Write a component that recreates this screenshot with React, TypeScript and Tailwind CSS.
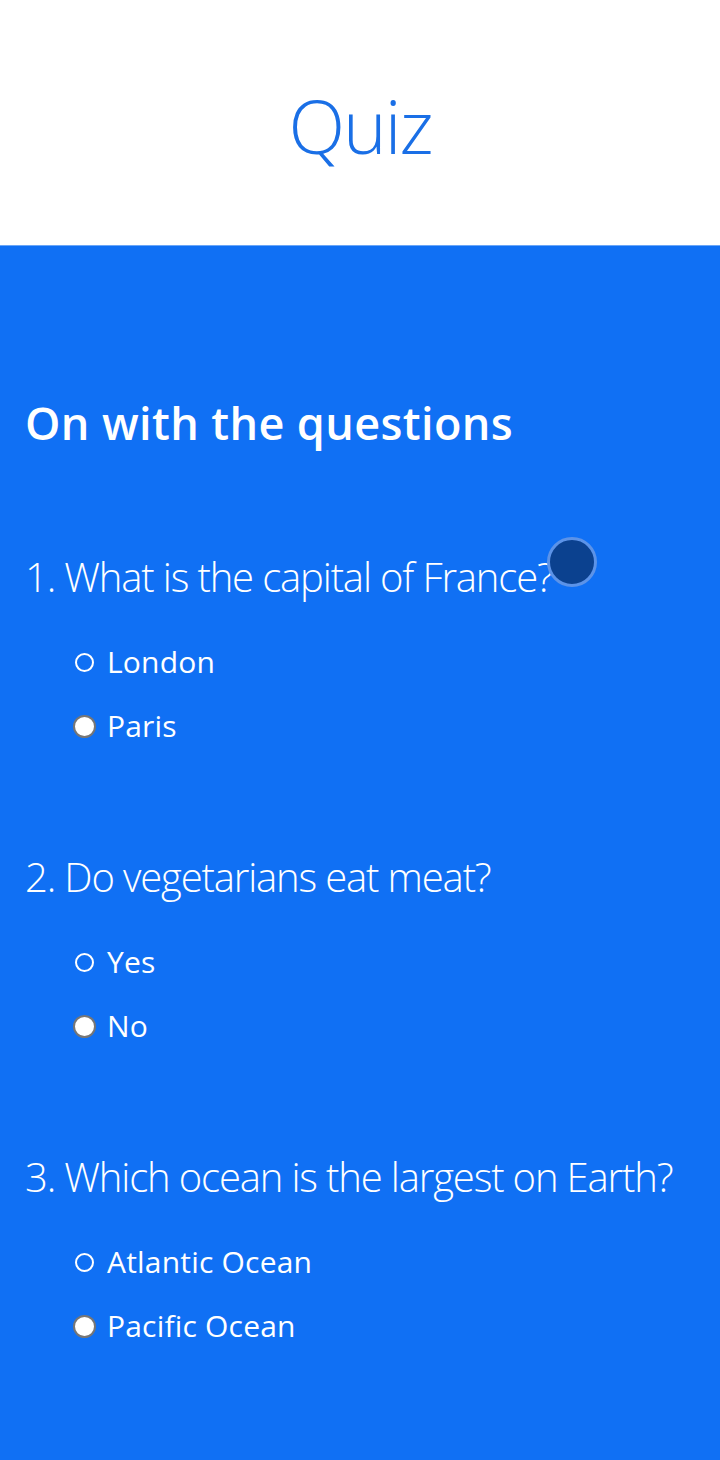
import React from "react";

const questions = [
  { q: "1. What is the capital of France?", opts: ["London", "Paris"] },
  { q: "2. Do vegetarians eat meat?", opts: ["Yes", "No"] },
  { q: "3. Which ocean is the largest on Earth?", opts: ["Atlantic Ocean", "Pacific Ocean"] },
];

export default function App() {
  return (
    <div className="w-[720px] min-h-[1460px] bg-[#1070f4] font-['Open_Sans',sans-serif]">
      <header className="h-[246px] bg-white flex items-center justify-center border-b border-[#6aa6f7]">
        <h1 className="text-[74px] font-light text-[#1a6fe6] leading-none mt-[6px] tracking-[-2px]">Quiz</h1>
      </header>
      <main className="relative px-[25px] pt-[147px] pb-[101px] text-white">
        <h2 className="text-[45px] font-semibold leading-[60px] h-[60px] tracking-[0.4px]">On with the questions</h2>
        {questions.map((item, i) => (
          <section key={i} className={i === 0 ? "mt-[94px]" : "mt-[89px]"}>
            <p className="text-[40px] font-light leading-[60px] h-[60px] whitespace-nowrap tracking-[-1.15px]">{item.q}</p>
            <div className="mt-[23px] pl-[48px]">
              {item.opts.map((o, j) => (
                <label key={j} className="flex items-center h-[64px]">
                  {j === 0 ? (
                    <span className="w-[19px] h-[19px] rounded-full border-[2.5px] border-white ml-[2px] mr-[13px]" />
                  ) : (
                    <span className="w-[23px] h-[23px] rounded-full bg-white border-[2px] border-[#767676] mr-[11px]" />
                  )}
                  <span className="text-[30px] leading-none tracking-[0.2px]">{o}</span>
                </label>
              ))}
            </div>
          </section>
        ))}
        <div className="absolute left-[547px] top-[291px] w-[50px] h-[50px] rounded-full bg-[#0b418f] border-[3px] border-[#5c93e8]" />
      </main>
    </div>
  );
}
